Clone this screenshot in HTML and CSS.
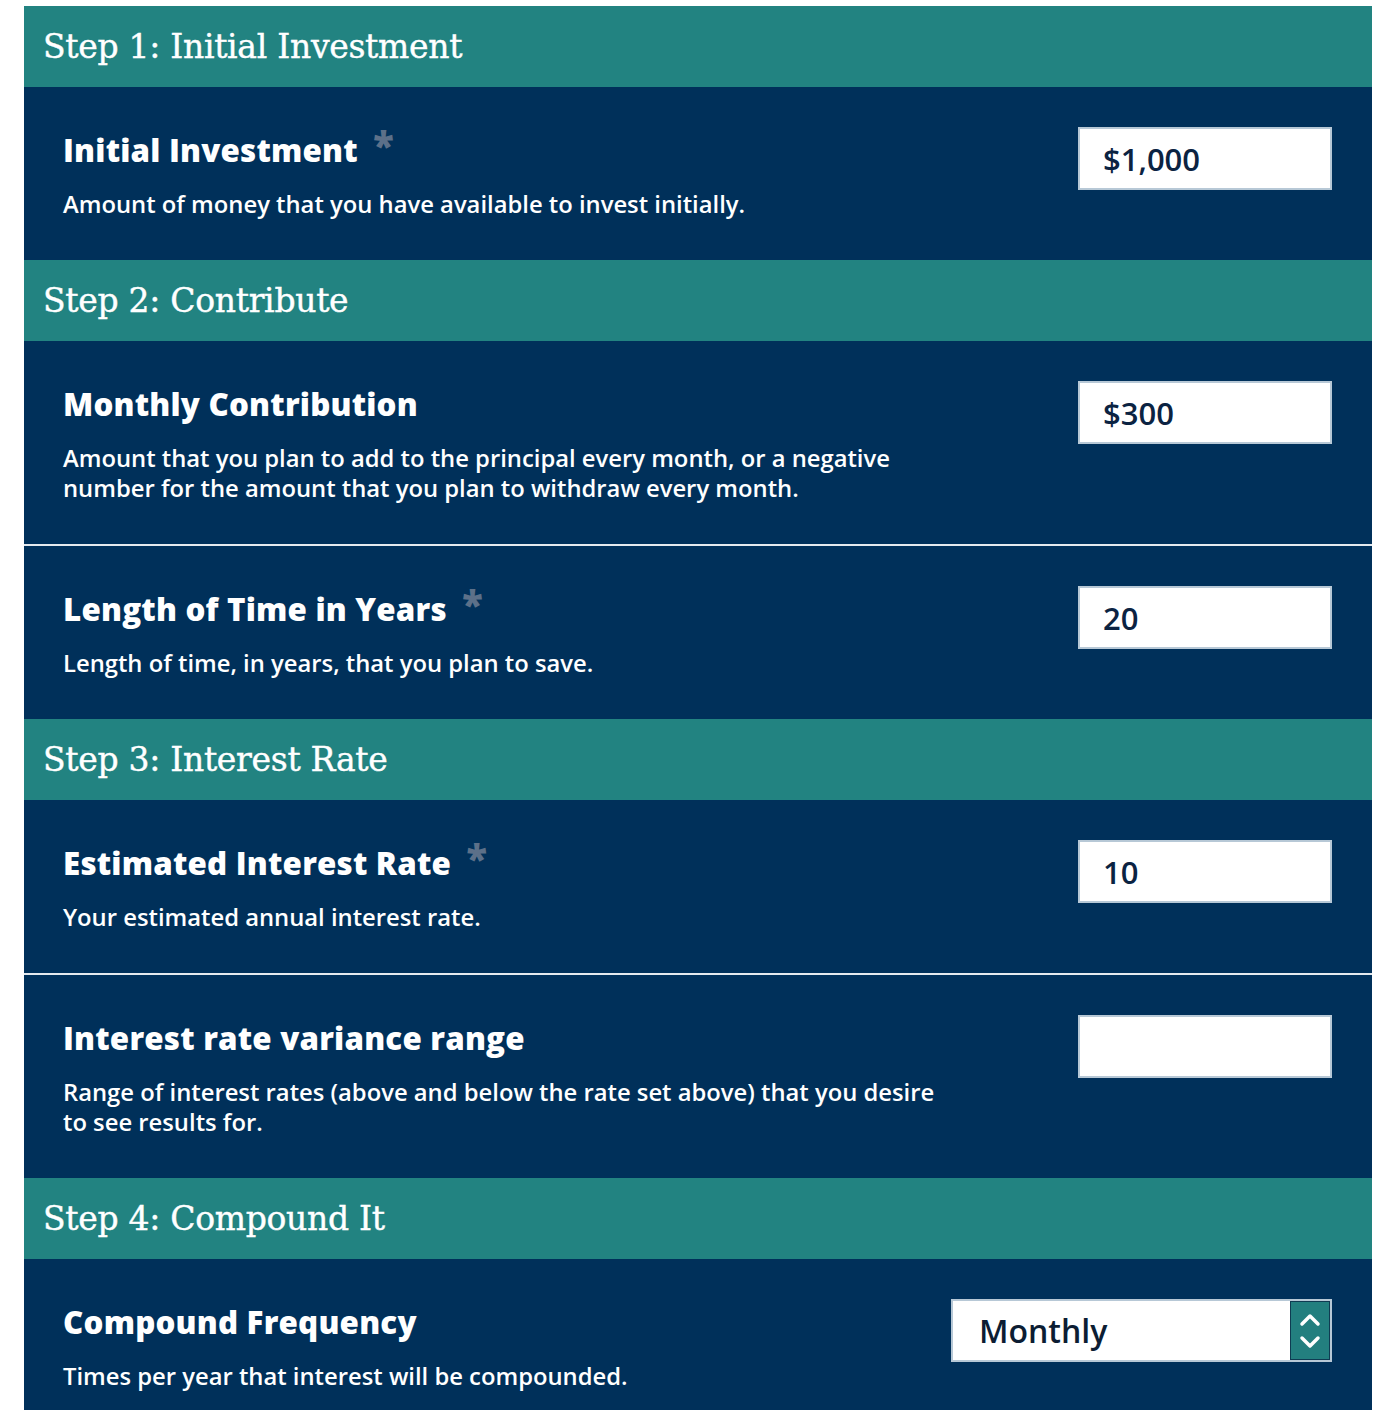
FILE: index.html
```html
<!DOCTYPE html>
<html lang="en">
<head>
<meta charset="utf-8">
<title>Compound Interest Calculator</title>
<link rel="stylesheet" href="styles.css">
</head>
<body>
<div class="calc">
  <div class="step-head">Step 1: Initial Investment</div>
  <div class="field">
    <div class="info">
      <div class="label">Initial Investment <span class="req">*</span></div>
      <p class="desc">Amount of money that you have available to invest initially.</p>
    </div>
    <div class="control"><div class="text-input">$1,000</div></div>
  </div>

  <div class="step-head">Step 2: Contribute</div>
  <div class="field">
    <div class="info">
      <div class="label">Monthly Contribution</div>
      <p class="desc">Amount that you plan to add to the principal every month, or a negative number for the amount that you plan to withdraw every month.</p>
    </div>
    <div class="control"><div class="text-input">$300</div></div>
  </div>
  <div class="field divided">
    <div class="info">
      <div class="label">Length of Time in Years <span class="req">*</span></div>
      <p class="desc">Length of time, in years, that you plan to save.</p>
    </div>
    <div class="control"><div class="text-input">20</div></div>
  </div>

  <div class="step-head">Step 3: Interest Rate</div>
  <div class="field">
    <div class="info">
      <div class="label">Estimated Interest Rate <span class="req">*</span></div>
      <p class="desc">Your estimated annual interest rate.</p>
    </div>
    <div class="control"><div class="text-input">10</div></div>
  </div>
  <div class="field divided">
    <div class="info">
      <div class="label">Interest rate variance range</div>
      <p class="desc">Range of interest rates (above and below the rate set above) that you desire to see results for.</p>
    </div>
    <div class="control"><div class="text-input"></div></div>
  </div>

  <div class="step-head">Step 4: Compound It</div>
  <div class="field">
    <div class="info">
      <div class="label">Compound Frequency</div>
      <p class="desc">Times per year that interest will be compounded.</p>
    </div>
    <div class="control">
      <div class="select">
        <span class="select-value">Monthly</span>
        <span class="select-arrows">
          <svg width="26" height="48" viewBox="0 0 26 48" aria-hidden="true">
            <path d="M5 17 L13 9 L21 17" fill="none" stroke="#ffffff" stroke-width="3.5" stroke-linecap="round" stroke-linejoin="round"/>
            <path d="M5 31 L13 39 L21 31" fill="none" stroke="#ffffff" stroke-width="3.5" stroke-linecap="round" stroke-linejoin="round"/>
          </svg>
        </span>
      </div>
    </div>
  </div>
</div>
</body>
</html>
```

FILE: styles.css
```css
html, body {
  margin: 0;
  padding: 0;
  background: #ffffff;
}

body {
  padding: 6px 28px 0 24px;
  font-family: "Open Sans", "Liberation Sans", sans-serif;
}

.calc {
  background: #00305a;
  overflow: hidden;
}

.step-head {
  background: #228381;
  height: 81px;
  display: flex;
  align-items: center;
  padding-left: 19px;
  color: #ffffff;
  font-family: "DejaVu Serif", "Liberation Serif", serif;
  font-size: 33px;
  letter-spacing: -0.3px;
  -webkit-text-stroke: 0.4px #ffffff;
}

.field {
  display: flex;
  justify-content: space-between;
  align-items: flex-start;
  padding: 40px 40px 41px 39px;
}

.field.divided {
  border-top: 2px solid #e4e9ee;
}

.info {
  max-width: 885px;
}

.label {
  margin-top: 1px;
  font-size: 31.3px;
  font-weight: 800;
  line-height: 45px;
  color: #ffffff;
  letter-spacing: 0.2px;
}

.req {
  color: #5c7089;
  font-size: 38px;
  line-height: 0;
  vertical-align: 2px;
  margin-left: 7px;
}

.desc {
  margin: 16px 0 0;
  font-size: 23.8px;
  font-weight: 600;
  line-height: 30px;
  color: #ffffff;
}

.control {
  flex: none;
}

.text-input {
  box-sizing: border-box;
  width: 254px;
  height: 63px;
  background: #ffffff;
  border: 2px solid #b7c8d6;
  padding-left: 23px;
  display: flex;
  align-items: center;
  font-size: 31px;
  font-weight: 600;
  color: #0b2342;
}

.select {
  box-sizing: border-box;
  width: 381px;
  height: 63px;
  background: #ffffff;
  border: 2px solid #b7c8d6;
  display: flex;
  align-items: stretch;
}

.select-value {
  flex: 1;
  display: flex;
  align-items: center;
  padding-left: 26px;
  font-size: 32px;
  font-weight: 600;
  color: #0c1d33;
}

.select-arrows {
  width: 38px;
  background: #237f7f;
  border: 1px solid #0f3b52;
  display: flex;
  align-items: center;
  justify-content: center;
}
```
